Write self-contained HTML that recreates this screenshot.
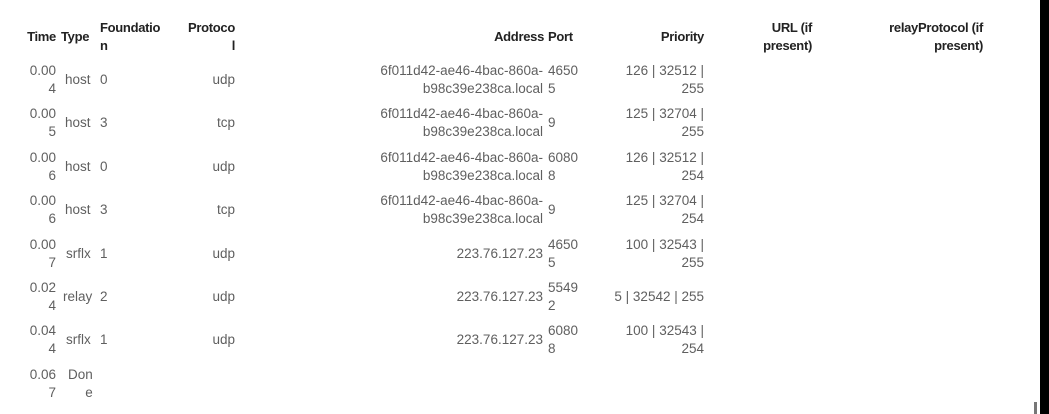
<!DOCTYPE html>
<html><head><meta charset="utf-8"><style>
html,body{margin:0;padding:0;background:#fff;width:1049px;height:414px;overflow:hidden;position:relative;font-family:"Liberation Sans",sans-serif;}
.c{position:absolute;height:36px;display:flex;flex-direction:column;justify-content:center;font-size:13.5px;line-height:18px;color:#5f5f5f;white-space:nowrap;}
.r{text-align:right}
.h{position:absolute;height:40px;display:flex;flex-direction:column;justify-content:center;font-size:13px;line-height:18px;font-weight:bold;color:#222;white-space:nowrap;letter-spacing:-0.3px;}
.bar{position:absolute;left:1040px;top:0;width:9px;height:414px;background:#000}
.mk{position:absolute;left:1034px;top:402px;width:3px;height:12px;background:#777}
</style></head><body>
<div class="h r" style="left:16px;width:40px;top:17px">Time</div>
<div class="h" style="left:61px;top:17px">Type</div>
<div class="h" style="left:100px;top:17px">Foundatio<br>n</div>
<div class="h r" style="left:170px;width:65px;top:17px">Protoco<br>l</div>
<div class="h r" style="left:400px;width:144px;top:17px">Address</div>
<div class="h" style="left:548px;top:17px">Port</div>
<div class="h r" style="left:600px;width:104px;top:17px">Priority</div>
<div class="h r" style="left:740px;width:72px;top:17px">URL (if<br>present)</div>
<div class="h r" style="left:860px;width:123px;top:17px">relayProtocol (if<br>present)</div>

<!-- row 1 -->
<div class="c r" style="left:20px;width:36px;top:62px">0.00<br>4</div>
<div class="c" style="left:65px;top:62px">host</div>
<div class="c" style="left:100px;top:62px">0</div>
<div class="c r" style="left:180px;width:55px;top:62px">udp</div>
<div class="c r" style="left:300px;width:243px;top:62px">6f011d42-ae46-4bac-860a-<br>b98c39e238ca.local</div>
<div class="c" style="left:548px;top:62px">4650<br>5</div>
<div class="c r" style="left:600px;width:104px;top:62px">126 | 32512 |<br>255</div>
<!-- row 2 -->
<div class="c r" style="left:20px;width:36px;top:105px">0.00<br>5</div>
<div class="c" style="left:65px;top:105px">host</div>
<div class="c" style="left:100px;top:105px">3</div>
<div class="c r" style="left:180px;width:55px;top:105px">tcp</div>
<div class="c r" style="left:300px;width:243px;top:105px">6f011d42-ae46-4bac-860a-<br>b98c39e238ca.local</div>
<div class="c" style="left:548px;top:105px">9</div>
<div class="c r" style="left:600px;width:104px;top:105px">125 | 32704 |<br>255</div>
<!-- row 3 -->
<div class="c r" style="left:20px;width:36px;top:149px">0.00<br>6</div>
<div class="c" style="left:65px;top:149px">host</div>
<div class="c" style="left:100px;top:149px">0</div>
<div class="c r" style="left:180px;width:55px;top:149px">udp</div>
<div class="c r" style="left:300px;width:243px;top:149px">6f011d42-ae46-4bac-860a-<br>b98c39e238ca.local</div>
<div class="c" style="left:548px;top:149px">6080<br>8</div>
<div class="c r" style="left:600px;width:104px;top:149px">126 | 32512 |<br>254</div>
<!-- row 4 -->
<div class="c r" style="left:20px;width:36px;top:192px">0.00<br>6</div>
<div class="c" style="left:65px;top:192px">host</div>
<div class="c" style="left:100px;top:192px">3</div>
<div class="c r" style="left:180px;width:55px;top:192px">tcp</div>
<div class="c r" style="left:300px;width:243px;top:192px">6f011d42-ae46-4bac-860a-<br>b98c39e238ca.local</div>
<div class="c" style="left:548px;top:192px">9</div>
<div class="c r" style="left:600px;width:104px;top:192px">125 | 32704 |<br>254</div>
<!-- row 5 -->
<div class="c r" style="left:20px;width:36px;top:236px">0.00<br>7</div>
<div class="c" style="left:66px;top:236px">srflx</div>
<div class="c" style="left:100px;top:236px">1</div>
<div class="c r" style="left:180px;width:55px;top:236px">udp</div>
<div class="c r" style="left:300px;width:243px;top:236px">223.76.127.23</div>
<div class="c" style="left:548px;top:236px">4650<br>5</div>
<div class="c r" style="left:600px;width:104px;top:236px">100 | 32543 |<br>255</div>
<!-- row 6 -->
<div class="c r" style="left:20px;width:36px;top:279px">0.02<br>4</div>
<div class="c" style="left:63px;top:279px">relay</div>
<div class="c" style="left:100px;top:279px">2</div>
<div class="c r" style="left:180px;width:55px;top:279px">udp</div>
<div class="c r" style="left:300px;width:243px;top:279px">223.76.127.23</div>
<div class="c" style="left:548px;top:279px">5549<br>2</div>
<div class="c r" style="left:600px;width:104px;top:279px">5 | 32542 | 255</div>
<!-- row 7 -->
<div class="c r" style="left:20px;width:36px;top:322px">0.04<br>4</div>
<div class="c" style="left:66px;top:322px">srflx</div>
<div class="c" style="left:100px;top:322px">1</div>
<div class="c r" style="left:180px;width:55px;top:322px">udp</div>
<div class="c r" style="left:300px;width:243px;top:322px">223.76.127.23</div>
<div class="c" style="left:548px;top:322px">6080<br>8</div>
<div class="c r" style="left:600px;width:104px;top:322px">100 | 32543 |<br>254</div>
<!-- row 8 -->
<div class="c r" style="left:20px;width:36px;top:366px">0.06<br>7</div>
<div class="c" style="left:68px;top:366px;text-align:right">Don<br>e</div>

<div class="mk"></div>
<div class="bar"></div>
</body></html>
